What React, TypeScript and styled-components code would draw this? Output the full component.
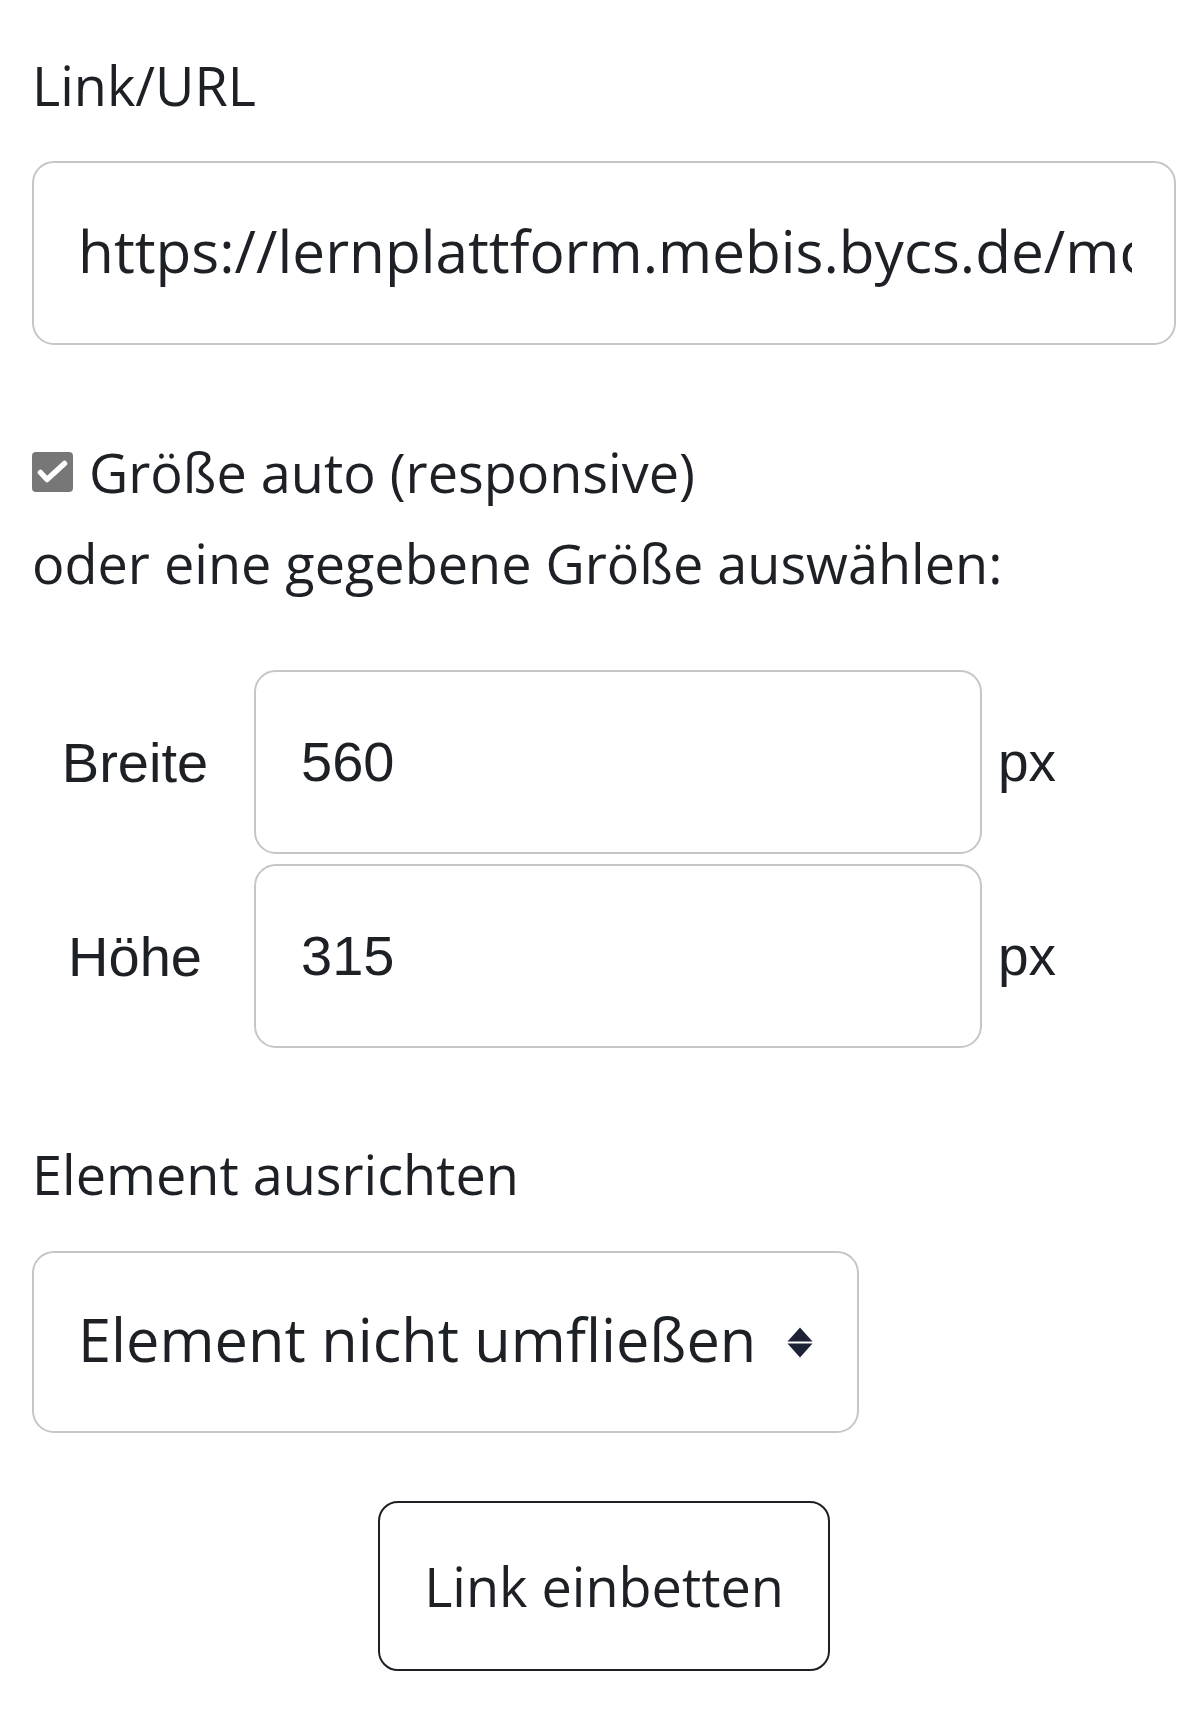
import React from "react";
import styled, { createGlobalStyle } from "styled-components";

const GlobalStyle = createGlobalStyle`
  html, body {
    margin: 0;
    padding: 0;
    background: #ffffff;
  }
  body {
    font-family: "Open Sans", "Noto Sans", sans-serif;
    color: #1d2125;
  }
`;

const Page = styled.form`
  box-sizing: content-box;
  width: 1144px;
  padding: 45px 0 40px 32px;
  display: flex;
  flex-direction: column;
`;

const FieldLabel = styled.label<{ $top?: number }>`
  display: block;
  margin-top: ${(p) => p.$top ?? 0}px;
  font-size: 54px;
  line-height: 80px;
  color: #1d2125;
`;

const TextInput = styled.input`
  box-sizing: border-box;
  width: 100%;
  height: 184px;
  margin: 36px 0 0;
  padding: 0 42px 7px 44px;
  border: 2px solid #c6c6c6;
  border-radius: 22px;
  background: #ffffff;
  font-family: "Open Sans", "Noto Sans", sans-serif;
  font-size: 58.5px;
  color: #1d2125;
  outline: none;
`;

const CheckRow = styled.label`
  display: flex;
  align-items: center;
  gap: 16px;
  height: 80px;
  margin-top: 87px;
  font-size: 54px;
  line-height: 80px;
`;

const CheckBox = styled.span`
  flex-shrink: 0;
  width: 41px;
  height: 40px;
  border-radius: 4px;
  background: #777777;
  display: flex;
  align-items: center;
  justify-content: center;
`;

const Hint = styled.p`
  margin: 11px 0 0;
  font-size: 54px;
  line-height: 80px;
`;

const SizeGrid = styled.div`
  display: grid;
  grid-template-columns: 206px 728px auto;
  column-gap: 16px;
  row-gap: 10px;
  align-items: center;
  margin-top: 67px;
`;

const SizeLabel = styled.label`
  font-family: "Liberation Sans", Arial, sans-serif;
  font-size: 56px;
  text-align: center;
  color: #1d2125;
`;

const SizeInput = styled.input`
  box-sizing: border-box;
  width: 100%;
  height: 184px;
  margin: 0;
  padding: 0 40px 2px 45px;
  border: 2px solid #c6c6c6;
  border-radius: 22px;
  background: #ffffff;
  font-family: "Liberation Sans", Arial, sans-serif;
  font-size: 56px;
  color: #1d2125;
  outline: none;
`;

const Unit = styled.span`
  font-family: "Liberation Sans", Arial, sans-serif;
  font-size: 55px;
  color: #1d2125;
`;

const SelectBox = styled.div`
  box-sizing: border-box;
  width: 827px;
  height: 182px;
  margin-top: 37px;
  padding: 0 44px 8px 44px;
  border: 2px solid #c6c6c6;
  border-radius: 22px;
  display: flex;
  align-items: center;
  justify-content: space-between;
  font-size: 59.5px;
  color: #1d2125;
`;

const SortGlyph = styled.svg`
  flex-shrink: 0;
  margin-top: 8px;
`;

const ButtonRow = styled.div`
  display: flex;
  justify-content: center;
  margin-top: 68px;
`;

const EmbedButton = styled.button`
  box-sizing: border-box;
  height: 170px;
  padding: 0 44px;
  border: 2px solid #1d2125;
  border-radius: 20px;
  background: #ffffff;
  font-family: "Open Sans", "Noto Sans", sans-serif;
  font-size: 54px;
  color: #1d2125;
  cursor: pointer;
`;

const CheckIcon = () => (
  <svg width="41" height="40" viewBox="0 0 41 40" aria-hidden="true">
    <path
      d="M8.5 20.5 L15 27.5 L32.5 11.5"
      fill="none"
      stroke="#ffffff"
      strokeWidth="5.5"
      strokeLinecap="round"
      strokeLinejoin="round"
    />
  </svg>
);

const SortIcon = () => (
  <SortGlyph width="26" height="31" viewBox="0 0 26 31" aria-hidden="true">
    <path d="M13 0.5 L25.5 14.5 H0.5 Z" fill="#1d2135" />
    <path d="M0.5 16.5 H25.5 L13 30.5 Z" fill="#1d2135" />
  </SortGlyph>
);

export default function App() {
  return (
    <>
      <GlobalStyle />
      <Page onSubmit={(e) => e.preventDefault()}>
        <FieldLabel htmlFor="url">Link/URL</FieldLabel>
        <TextInput
          id="url"
          type="text"
          readOnly
          value="https://lernplattform.mebis.bycs.de/mod/page/view.php"
        />

        <CheckRow>
          <CheckBox>
            <CheckIcon />
          </CheckBox>
          Größe auto (responsive)
        </CheckRow>
        <Hint>oder eine gegebene Größe auswählen:</Hint>

        <SizeGrid>
          <SizeLabel htmlFor="width">Breite</SizeLabel>
          <SizeInput id="width" type="text" readOnly value="560" />
          <Unit>px</Unit>
          <SizeLabel htmlFor="height">Höhe</SizeLabel>
          <SizeInput id="height" type="text" readOnly value="315" />
          <Unit>px</Unit>
        </SizeGrid>

        <FieldLabel $top={86}>Element ausrichten</FieldLabel>
        <SelectBox>
          <span>Element nicht umfließen</span>
          <SortIcon />
        </SelectBox>

        <ButtonRow>
          <EmbedButton type="button">Link einbetten</EmbedButton>
        </ButtonRow>
      </Page>
    </>
  );
}
